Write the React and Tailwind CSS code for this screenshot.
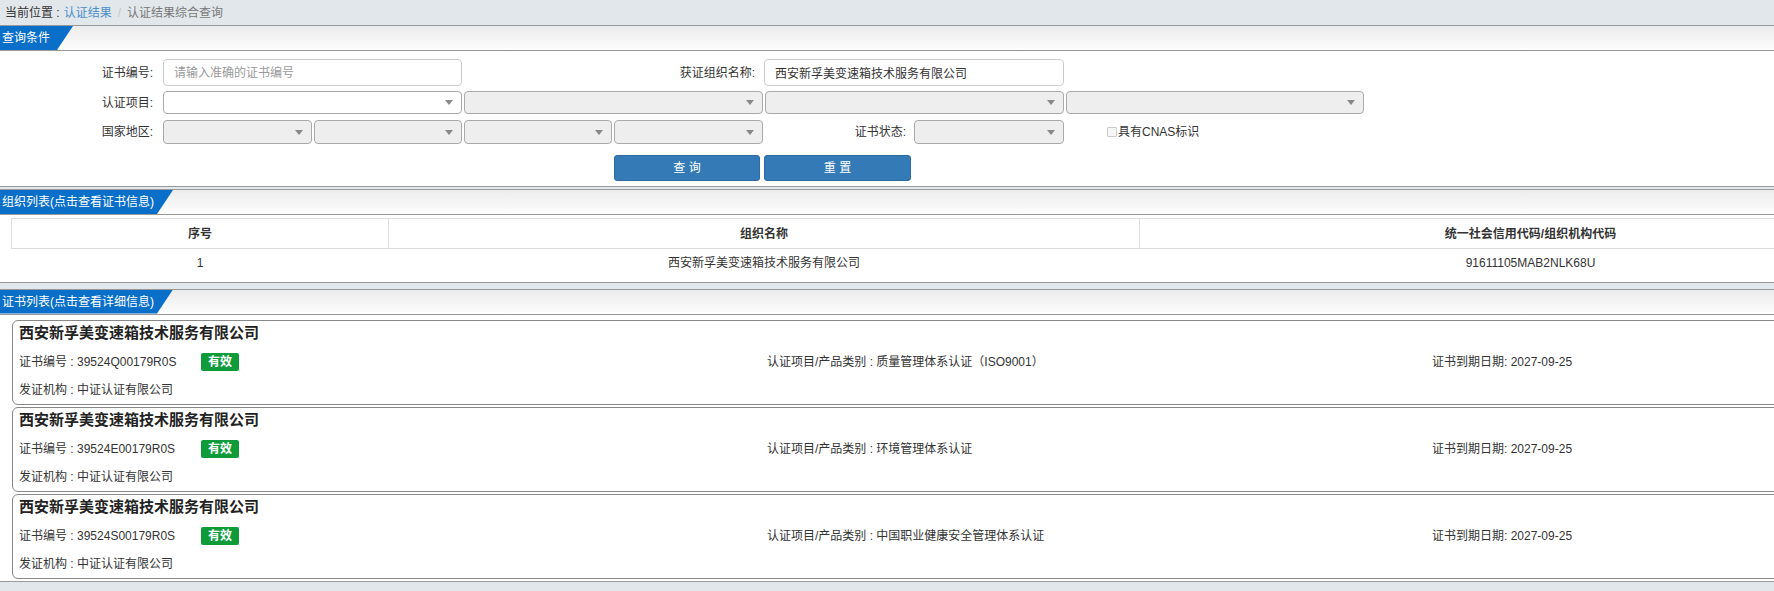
import React from "react";

const certs = [
  { no: "39524Q00179R0S", item: "质量管理体系认证（ISO9001）" },
  { no: "39524E00179R0S", item: "环境管理体系认证" },
  { no: "39524S00179R0S", item: "中国职业健康安全管理体系认证" },
];

const orgName = "西安新孚美变速箱技术服务有限公司";

function SectionHeader({ title, tabWidth }) {
  return (
    <div className="h-[25px] border-b border-[#999] bg-linear-to-b from-[#ececec] to-[#fdfdfd] flex items-stretch">
      <div
        className={`${tabWidth} bg-[#0a6fc9] text-white text-[12px] flex items-center pl-[2px] [clip-path:polygon(0_0,100%_0,calc(100%_-_16px)_100%,0_100%)]`}
      >
        {title}
      </div>
    </div>
  );
}

function Select({ width, white }) {
  return (
    <div
      className={`${width} h-full rounded-[4px] border border-[#aaa] flex items-center justify-end pr-[8px] ${
        white ? "bg-white" : "bg-[#eee]"
      }`}
    >
      <span className="w-0 h-0 border-l-[4px] border-r-[4px] border-t-[5px] border-l-transparent border-r-transparent border-t-[#888]" />
    </div>
  );
}

function CertCard({ cert }) {
  return (
    <div className="ml-[12px] w-[1900px] h-[85px] mb-[2px] border border-[#888] rounded-[6px] bg-white pt-[3px] px-[6px] text-[12px] text-[#333]">
      <div className="h-[20px] flex items-center text-[15px] font-bold text-[#222]">
        {orgName}
      </div>
      <div className="mt-[4px] h-[28px] flex items-center">
        <div className="w-[748px] flex items-center">
          <span className="w-[182px]">证书编号 : {cert.no}</span>
          <span className="w-[38px] h-[18px] rounded-[2px] bg-[#0f9b3a] text-white font-bold flex items-center justify-center">
            有效
          </span>
        </div>
        <div className="w-[665px]">认证项目/产品类别 : {cert.item}</div>
        <div>证书到期日期: 2027-09-25</div>
      </div>
      <div className="h-[28px] flex items-center">发证机构 : 中证认证有限公司</div>
    </div>
  );
}

export default function App() {
  return (
    <div className="w-full h-[591px] overflow-hidden bg-[#e2e7eb] text-[12px] text-[#333] font-['Liberation_Sans','Noto_Sans_CJK_SC',sans-serif]">
      {/* breadcrumb */}
      <div className="h-[25px] pl-[5px] flex items-center text-[12px]">
        <span className="text-[#333]">当前位置 :</span>
        <span className="ml-[4px] text-[#4a8fcb]">认证结果</span>
        <span className="mx-[6px] text-[#c5c5c5]">/</span>
        <span className="text-[#777]">认证结果综合查询</span>
      </div>

      {/* query panel */}
      <div className="border-t border-b border-[#999] bg-white">
        <SectionHeader title="查询条件" tabWidth="w-[73px]" />
        <div className="pt-[8px] pb-[5px]">
          <div className="h-[27px] flex items-center">
            <div className="w-[153px] text-right">证书编号:</div>
            <input
              className="ml-[10px] w-[299px] h-full rounded-[4px] border border-[#ccc] px-[10px] text-[12px] outline-none placeholder:text-[#999]"
              placeholder="请输入准确的证书编号"
            />
            <div className="w-[293px] text-right">获证组织名称:</div>
            <input
              className="ml-[9px] w-[300px] h-full rounded-[4px] border border-[#ccc] px-[10px] text-[12px] text-[#333] outline-none"
              defaultValue={orgName}
            />
          </div>
          <div className="mt-[5px] h-[23px] flex items-center">
            <div className="w-[153px] text-right">认证项目:</div>
            <div className="ml-[10px] h-full flex gap-[2px]">
              <Select width="w-[299px]" white />
              <Select width="w-[299px]" />
              <Select width="w-[299px]" />
              <Select width="w-[298px]" />
            </div>
          </div>
          <div className="mt-[6px] h-[24px] flex items-center">
            <div className="w-[153px] text-right">国家地区:</div>
            <div className="ml-[10px] h-full flex gap-[2px]">
              <Select width="w-[149px]" />
              <Select width="w-[148px]" />
              <Select width="w-[148px]" />
              <Select width="w-[149px]" />
            </div>
            <div className="w-[143px] text-right">证书状态:</div>
            <div className="ml-[8px] h-full flex">
              <Select width="w-[150px]" />
            </div>
            <div className="ml-[43px] flex items-center">
              <span className="w-[10px] h-[10px] border border-[#ccc] bg-[#f6f6f6] rounded-[1px]" />
              <span className="ml-[1px]">具有CNAS标识</span>
            </div>
          </div>
          <div className="mt-[11px] h-[26px] flex pl-[614px] gap-[4px]">
            <button className="w-[146px] h-full rounded-[3px] bg-[#337ab7] border border-[#2e6da4] text-white text-[12px]">
              查 询
            </button>
            <button className="w-[147px] h-full rounded-[3px] bg-[#337ab7] border border-[#2e6da4] text-white text-[12px]">
              重 置
            </button>
          </div>
        </div>
      </div>

      {/* org list */}
      <div className="mt-[2px] border-t border-b border-[#999] bg-white pb-[4px]">
        <SectionHeader title="组织列表(点击查看证书信息)" tabWidth="w-[173px]" />
        <table className="mt-[3px] ml-[11px] w-[1910px] table-fixed border-collapse text-[12px]">
          <colgroup>
            <col className="w-[377px]" />
            <col className="w-[751px]" />
            <col className="w-[782px]" />
          </colgroup>
          <thead>
            <tr className="h-[30px]">
              <th className="border border-[#ddd] font-bold">序号</th>
              <th className="border border-[#ddd] font-bold">组织名称</th>
              <th className="border border-[#ddd] font-bold">统一社会信用代码/组织机构代码</th>
            </tr>
          </thead>
          <tbody>
            <tr className="h-[29px]">
              <td className="text-center">1</td>
              <td className="text-center">{orgName}</td>
              <td className="text-center">91611105MAB2NLK68U</td>
            </tr>
          </tbody>
        </table>
      </div>

      {/* cert list */}
      <div className="mt-[6px] border-t border-b border-[#999] bg-white">
        <SectionHeader title="证书列表(点击查看详细信息)" tabWidth="w-[173px]" />
        <div className="pt-[5px]">
          {certs.map((c) => (
            <CertCard key={c.no} cert={c} />
          ))}
        </div>
      </div>
    </div>
  );
}
